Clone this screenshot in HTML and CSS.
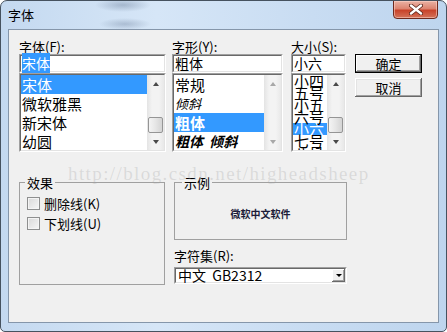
FILE: index.html
```html
<!DOCTYPE html>
<html>
<head>
  <title>字体</title>
  <link rel="stylesheet" href="styles.css">
</head>
<body>

  <div class="window">
    <div class="titlebar">
      <span class="title">字体</span>
      <button class="close">
        <svg width="14" height="11" viewBox="0 0 14 11">
          <path d="M2 1.5 L12 9.5 M12 1.5 L2 9.5" stroke="#5a2418" stroke-width="4" stroke-linecap="round"/>
          <path d="M2 1.5 L12 9.5 M12 1.5 L2 9.5" stroke="#fff" stroke-width="2.4" stroke-linecap="round"/>
        </svg>
      </button>
    </div>

    <div class="client">
      <div class="top">
        <div class="col col-font">
          <div class="label">字体(F):</div>
          <div class="sunken textbox"><div class="in"><span class="hl">宋体</span></div></div>
          <div class="sunken listbox">
            <div class="in">
              <ul class="rows">
                <li class="sel">宋体</li>
                <li>微软雅黑</li>
                <li>新宋体</li>
                <li>幼圆</li>
              </ul>
              <div class="scroll">
                <span class="sbtn"><i class="arrow up"></i></span>
                <span class="track"><span class="thumb"></span></span>
                <span class="sbtn"><i class="arrow down"></i></span>
              </div>
            </div>
          </div>
        </div>

        <div class="col col-style">
          <div class="label">字形(Y):</div>
          <div class="sunken textbox"><div class="in">粗体</div></div>
          <div class="sunken listbox">
            <div class="in">
              <ul class="rows">
                <li>常规</li>
                <li class="italic">倾斜</li>
                <li class="sel bold">粗体</li>
                <li class="bold italic">粗体&nbsp;&nbsp;倾斜</li>
              </ul>
              <div class="scroll off">
                <span class="sbtn"><i class="arrow up"></i></span>
                <span class="track"></span>
                <span class="sbtn"><i class="arrow down"></i></span>
              </div>
            </div>
          </div>
        </div>

        <div class="col col-size">
          <div class="label">大小(S):</div>
          <div class="sunken textbox"><div class="in">小六</div></div>
          <div class="sunken listbox">
            <div class="in">
              <ul class="rows tight">
                <li>小四</li>
                <li>五号</li>
                <li>小五</li>
                <li>六号</li>
                <li class="sel">小六</li>
                <li>七号</li>
                <li>八号</li>
              </ul>
              <div class="scroll">
                <span class="sbtn"><i class="arrow up"></i></span>
                <span class="track"><span class="thumb"></span></span>
                <span class="sbtn"><i class="arrow down"></i></span>
              </div>
            </div>
          </div>
        </div>

        <div class="buttons">
          <button class="btn default">确定</button>
          <button class="btn">取消</button>
        </div>
      </div>

      <div class="bottom">
        <fieldset class="group effects">
          <legend>效果</legend>
          <label class="check"><span class="box"></span>删除线(K)</label>
          <label class="check"><span class="box"></span>下划线(U)</label>
        </fieldset>

        <div class="right">
          <fieldset class="group sample">
            <legend>示例</legend>
            <div class="sample-text">微软中文软件</div>
          </fieldset>
          <div class="label charset-label">字符集(R):</div>
          <div class="sunken combo">
            <div class="in">
              <span class="combo-text">中文&nbsp;&nbsp;GB2312</span>
              <span class="drop"><i class="arrow down"></i></span>
            </div>
          </div>
        </div>
      </div>
    </div>

    <div class="watermark">http://blog.csdn.net/higheadsheep</div>
  </div>

</body>
</html>
```

FILE: styles.css
```css
* {
  box-sizing: border-box;
}

body {
  margin: 0;
  background: #fff;
  font-family: "Noto Sans CJK SC", sans-serif;
  font-size: 13px;
  color: #000;
}

.window {
  position: relative;
  width: 447px;
  height: 332px;
  padding: 0 7px;
  border: 1px solid #46525f;
  border-radius: 7px 7px 5px 5px;
  overflow: hidden;
  background:
    radial-gradient(ellipse 28px 7px at 122px 4px, rgba(80, 100, 130, 0.35), transparent),
    radial-gradient(ellipse 26px 6px at 124px 23px, rgba(80, 100, 130, 0.3), transparent),
    linear-gradient(to right, #c4d9f0, #d6e6f7 35%, #c8dcf2 70%, #bed5ee);
}

/* title bar */
.titlebar {
  display: flex;
  align-items: flex-start;
  height: 28px;
}

.title {
  padding-top: 5px;
  line-height: 17px;
  font-size: 13px;
}

.close {
  display: flex;
  align-items: center;
  justify-content: center;
  width: 45px;
  height: 19px;
  margin: -1px 1px 0 auto;
  padding: 0;
  border: 1px solid #6e2a1e;
  border-radius: 0 0 4px 4px;
  background: linear-gradient(to bottom, #eab2a4, #dc8470 45%, #c8432a 55%, #d4735a);
  box-shadow: inset 0 0 0 1px rgba(255, 220, 210, 0.5);
}

/* client area */
.client {
  height: 294px;
  padding: 9px 0 0 10px;
  background: #f0f0f0;
  border: 1px solid #8596aa;
}

.top {
  display: flex;
}

.col-font {
  width: 147px;
}

.col-style {
  width: 111px;
  margin-left: 6px;
}

.col-size {
  width: 55px;
  margin-left: 8px;
}

.buttons {
  width: 67px;
  margin-left: 9px;
  padding-top: 15px;
}

.label {
  height: 15px;
  line-height: 15px;
  white-space: nowrap;
}

/* sunken boxes */
.sunken {
  border: 1px solid;
  border-color: #a0a0a0 #fff #fff #a0a0a0;
}

.sunken > .in {
  height: 100%;
  border: 1px solid;
  border-color: #696969 #e3e3e3 #e3e3e3 #696969;
  background: #fff;
}

.textbox {
  height: 19px;
}

.textbox .in {
  font-size: 14px;
  line-height: 15px;
  padding-left: 1px;
  white-space: nowrap;
}

.hl {
  background: #3399ff;
  color: #fff;
}

.listbox {
  height: 79px;
}

.listbox .in {
  display: flex;
}

.rows {
  flex: 1;
  margin: 0;
  padding: 0;
  list-style: none;
  overflow: hidden;
}

.rows li {
  height: 19px;
  line-height: 19px;
  padding-left: 1px;
  font-size: 15px;
  white-space: nowrap;
}

.rows .sel {
  background: #3399ff;
  color: #fff;
}

.rows .italic {
  font-style: italic;
  font-size: 13px;
}

.rows .bold {
  font-weight: bold;
}

.rows .bold.italic {
  font-size: 14px;
}

.rows.tight li {
  height: 12px;
  line-height: 12px;
}

/* scroll bars */
.scroll {
  display: flex;
  flex-direction: column;
  width: 17px;
  background: linear-gradient(to right, #e4e4e4, #f3f3f3 30%, #f3f3f3 70%, #e8e8e8);
}

.sbtn {
  display: flex;
  align-items: center;
  justify-content: center;
  height: 17px;
}

.track {
  flex: 1;
  display: flex;
  flex-direction: column;
  justify-content: flex-end;
}

.thumb {
  height: 16px;
  margin: 0 1px;
  border: 1px solid #959595;
  border-radius: 2px;
  background: linear-gradient(to right, #f4f4f4, #e6e6e6 50%, #d4d4d4);
}

.arrow {
  width: 0;
  height: 0;
  border-left: 3.5px solid transparent;
  border-right: 3.5px solid transparent;
}

.arrow.up {
  border-bottom: 4px solid #4a4a4a;
}

.arrow.down {
  border-top: 4px solid #4a4a4a;
}

.scroll.off .arrow.up {
  border-bottom-color: #a8a8a8;
}

.scroll.off .arrow.down {
  border-top-color: #a8a8a8;
}

/* buttons */
.btn {
  display: block;
  width: 100%;
  height: 19px;
  padding: 0;
  border: none;
  background: #f0f0f0;
  font-family: "Noto Sans CJK SC", sans-serif;
  font-size: 13px;
  line-height: 17px;
  box-shadow: inset -1px -1px #696969, inset 1px 1px #fff, inset -2px -2px #a0a0a0, inset 2px 2px #e3e3e3;
}

.btn.default {
  border: 1px solid #000;
  box-shadow: inset -1px -1px #696969, inset 1px 1px #fff, inset -2px -2px #a0a0a0;
}

.btn + .btn {
  margin-top: 5px;
}

/* lower half */
.bottom {
  display: flex;
  margin-top: 24px;
}

.group {
  margin: 0;
  padding: 0;
  min-inline-size: 0;
  border: 1px solid #a0a0a0;
}

.group legend {
  padding: 0 2px;
  font-size: 13px;
  line-height: 13px;
}

.effects {
  width: 146px;
  height: 109px;
  padding-top: 4px;
}

.effects legend {
  margin-left: 5px;
}

.check {
  display: flex;
  align-items: center;
  height: 20px;
  padding-left: 7px;
  white-space: nowrap;
}

.box {
  width: 13px;
  height: 13px;
  margin-right: 4px;
  border: 1px solid #8e8f8f;
  background: linear-gradient(135deg, #d8d8d8, #f6f6f6);
  box-shadow: inset 0 0 0 1px #f4f4f4;
}

.right {
  width: 173px;
  margin-left: 9px;
}

.sample {
  height: 64px;
}

.sample legend {
  margin-left: 7px;
}

.sample-text {
  padding-top: 19px;
  text-align: center;
  font-size: 10px;
  line-height: 12px;
  font-weight: bold;
  color: #1c1c38;
}

.charset-label {
  margin-top: 9px;
  height: 14px;
  line-height: 14px;
}

.combo {
  height: 17px;
  margin-top: 4px;
}

.combo .in {
  display: flex;
  align-items: stretch;
}

.combo-text {
  flex: 1;
  padding-left: 2px;
  font-size: 14px;
  line-height: 13px;
  white-space: nowrap;
}

.drop {
  display: flex;
  align-items: center;
  justify-content: center;
  width: 13px;
  background: #f0f0f0;
  box-shadow: inset -1px -1px #696969, inset 1px 1px #fff, inset -2px -2px #a0a0a0;
}

.drop .arrow.down {
  border-left-width: 3px;
  border-right-width: 3px;
  border-top: 3px solid #000;
}

/* blog watermark over the dialog */
.watermark {
  position: absolute;
  left: 67px;
  top: 163px;
  font-family: "Liberation Serif", serif;
  font-size: 19px;
  letter-spacing: 1.4px;
  line-height: 20px;
  color: rgba(160, 160, 160, 0.28);
  white-space: nowrap;
  pointer-events: none;
}
```
